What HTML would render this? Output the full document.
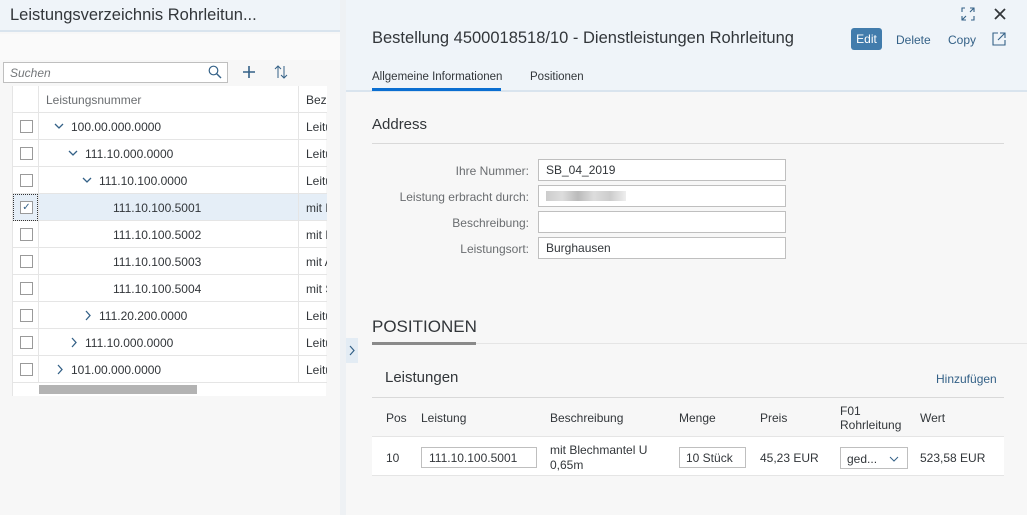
<!DOCTYPE html>
<html><head><meta charset="utf-8"><style>
*{margin:0;padding:0;box-sizing:border-box}
body{width:1027px;height:515px;overflow:hidden;background:#f7f7f7;font-family:"Liberation Sans",sans-serif;color:#32363a;position:relative;font-size:12px}
.a{position:absolute}
.lhdr{left:0;top:0;width:340px;height:32px;background:#eff4f9;border-bottom:2px solid #d9e4ee}
.ltitle{left:10px;top:6px;font-size:16.5px;color:#32363a}
.lbody{left:0;top:34px;width:340px;height:481px;background:#f7f7f7}
.search{left:3px;top:62px;width:225px;height:21px;background:#fff;border:1px solid #bfbfbf;font-style:italic;color:#74777a;font-size:12px;padding:3px 6px}
.tbl{left:12px;top:86px;width:314px;height:310px;background:#fff;border-left:1px solid #e5e5e5}
.row{position:absolute;left:0;width:314px;height:27px;border-bottom:1px solid #e5e5e5;font-size:12px}
.row .cb{position:absolute;left:7px;top:7px;width:13px;height:13px;border:1px solid #9a9a9a;background:#fff}
.row .c1{position:absolute;left:25px;top:0;width:1px;height:27px;background:#e5e5e5}
.row .c2{position:absolute;left:285px;top:0;width:1px;height:27px;background:#e5e5e5}
.row .t{position:absolute;top:7px}
.row .b{position:absolute;left:293px;top:7px;width:21px;overflow:hidden;white-space:nowrap}
.ar{position:absolute;top:9px}
.rhdr{left:346px;top:0;width:681px;height:92px;background:#eff4f9;border-bottom:2px solid #d9e4ee}
.inp{position:absolute;left:538px;width:248px;height:22px;background:#fff;border:1px solid #bfbfbf;padding:3px 7px;font-size:12px}
.lbl{position:absolute;right:498px;font-size:12px;color:#6a6d70}
.th{position:absolute;top:411px;font-size:12px;color:#32363a}
</style></head><body>
<div class="a lhdr"></div>
<div class="a ltitle">Leistungsverzeichnis Rohrleitun...</div>
<div class="a lbody"></div>
<div class="a" style="left:0;top:34px;width:340px;height:26px;background:#fafafa"></div>
<div class="a search">Suchen</div>
<svg class="a" style="left:208px;top:65px" width="14" height="14" viewBox="0 0 14 14"><circle cx="5.5" cy="5.5" r="4.3" fill="none" stroke="#346187" stroke-width="1.2"/><path d="M8.7 8.7L13 13" stroke="#346187" stroke-width="1.4"/></svg>
<svg class="a" style="left:242px;top:65px" width="14" height="14"><path d="M7 1v12M1 7h12" stroke="#346187" stroke-width="1.6"/></svg>
<svg class="a" style="left:274px;top:64px" width="14" height="16"><path d="M4 14V2M1 5l3-3 3 3M10 2v12M7 11l3 3 3-3" fill="none" stroke="#346187" stroke-width="1"/></svg>
<div class="a tbl">
<div class="row" style="top:0;background:#fff"><div class="c1"></div><div class="c2"></div><div class="t" style="left:33px;color:#6a6d70">Leistungsnummer</div><div class="b">Bez</div></div>
<div class="row" style="top:27px"><div class="cb"></div><div class="c1"></div><div class="c2"></div><svg class="ar" style="left:41px" width="10" height="8"><path d="M1 2l4 4 4-4" fill="none" stroke="#346187" stroke-width="1.3"/></svg><div class="t" style="left:58px">100.00.000.0000</div><div class="b">Leitu</div></div>
<div class="row" style="top:54px"><div class="cb"></div><div class="c1"></div><div class="c2"></div><svg class="ar" style="left:55px" width="10" height="8"><path d="M1 2l4 4 4-4" fill="none" stroke="#346187" stroke-width="1.3"/></svg><div class="t" style="left:72px">111.10.000.0000</div><div class="b">Leitu</div></div>
<div class="row" style="top:81px"><div class="cb"></div><div class="c1"></div><div class="c2"></div><svg class="ar" style="left:69px" width="10" height="8"><path d="M1 2l4 4 4-4" fill="none" stroke="#346187" stroke-width="1.3"/></svg><div class="t" style="left:86px">111.10.100.0000</div><div class="b">Leitu</div></div>
<div class="row" style="top:108px;background:#e5eef7"><div style="position:absolute;left:0;top:0;width:25px;height:27px;border:1px dotted #333"></div><div class="cb" style="color:#346187;font-size:10px;line-height:11px;text-align:center">&#10003;</div><div class="c1"></div><div class="c2"></div><div class="t" style="left:100px">111.10.100.5001</div><div class="b">mit B</div></div>
<div class="row" style="top:135px"><div class="cb"></div><div class="c1"></div><div class="c2"></div><div class="t" style="left:100px">111.10.100.5002</div><div class="b">mit B</div></div>
<div class="row" style="top:162px"><div class="cb"></div><div class="c1"></div><div class="c2"></div><div class="t" style="left:100px">111.10.100.5003</div><div class="b">mit A</div></div>
<div class="row" style="top:189px"><div class="cb"></div><div class="c1"></div><div class="c2"></div><div class="t" style="left:100px">111.10.100.5004</div><div class="b">mit S</div></div>
<div class="row" style="top:216px"><div class="cb"></div><div class="c1"></div><div class="c2"></div><svg class="ar" style="left:71px;top:8px" width="8" height="11"><path d="M2 1l4 4.5L2 10" fill="none" stroke="#346187" stroke-width="1.3"/></svg><div class="t" style="left:86px">111.20.200.0000</div><div class="b">Leitu</div></div>
<div class="row" style="top:243px"><div class="cb"></div><div class="c1"></div><div class="c2"></div><svg class="ar" style="left:57px;top:8px" width="8" height="11"><path d="M2 1l4 4.5L2 10" fill="none" stroke="#346187" stroke-width="1.3"/></svg><div class="t" style="left:72px">111.10.000.0000</div><div class="b">Leitu</div></div>
<div class="row" style="top:270px"><div class="cb"></div><div class="c1"></div><div class="c2"></div><svg class="ar" style="left:43px;top:8px" width="8" height="11"><path d="M2 1l4 4.5L2 10" fill="none" stroke="#346187" stroke-width="1.3"/></svg><div class="t" style="left:58px">101.00.000.0000</div><div class="b">Leitu</div></div>
<div style="position:absolute;left:26px;top:299px;width:158px;height:9px;background:#b3b3b3"></div>
</div>
<div class="a" style="left:340px;top:0;width:6px;height:515px;background:#eef1f4"></div>
<div class="a rhdr"></div>
<div class="a" style="left:372px;top:29px;font-size:16.5px">Bestellung 4500018518/10 - Dienstleistungen Rohrleitung</div>
<div class="a" style="left:851px;top:28px;width:31px;height:22px;background:#427cac;border-radius:3px;color:#fff;font-size:12px;text-align:center;line-height:22px">Edit</div>
<div class="a" style="left:896px;top:33px;color:#346187">Delete</div>
<div class="a" style="left:948px;top:33px;color:#346187">Copy</div>
<svg class="a" style="left:992px;top:32px" width="14" height="14"><path d="M6 1H1v12h12V8M8 1h5v5M13 1L6 8" fill="none" stroke="#346187" stroke-width="1.1"/></svg>
<svg class="a" style="left:961px;top:7px" width="14" height="14"><path d="M9 1h4v4M13 1L9 5M5 13H1V9M1 13l4-4M1 5V1h3M13 9v4h-3" fill="none" stroke="#346187" stroke-width="1.1"/></svg>
<svg class="a" style="left:994px;top:8px" width="12" height="12"><path d="M1 1l10 10M11 1L1 11" stroke="#32363a" stroke-width="1.8"/></svg>
<div class="a" style="left:372px;top:71px;font-size:11.5px">Allgemeine Informationen</div>
<div class="a" style="left:530px;top:71px;font-size:11.5px;color:#32363a">Positionen</div>
<div class="a" style="left:372px;top:88px;width:129px;height:3px;background:#0a6ed1"></div>
<div class="a" style="left:372px;top:116px;font-size:15px">Address</div>
<div class="a" style="left:372px;top:143px;width:632px;height:1px;background:#d9d9d9"></div>
<div class="lbl" style="top:164px">Ihre Nummer:</div>
<div class="lbl" style="top:190px">Leistung erbracht durch:</div>
<div class="lbl" style="top:216px">Beschreibung:</div>
<div class="lbl" style="top:242px">Leistungsort:</div>
<div class="inp" style="top:159px">SB_04_2019</div>
<div class="inp" style="top:185px"><span style="display:inline-block;width:80px;height:10px;margin-top:2px;background:linear-gradient(90deg,#ccc,#ddd 20%,#bbb 40%,#ddd 60%,#ccc 80%,#eee)"></span></div>
<div class="inp" style="top:211px"></div>
<div class="inp" style="top:237px">Burghausen</div>
<div class="a" style="left:372px;top:317px;font-size:17px">POSITIONEN</div>
<div class="a" style="left:372px;top:343px;width:655px;height:1px;background:#e5e5e5"></div>
<div class="a" style="left:372px;top:342px;width:104px;height:3px;background:#8a8a8a"></div>
<div class="a" style="left:346px;top:338px;width:12px;height:25px;background:#e3ecf4"></div>
<svg class="a" style="left:348px;top:345px" width="8" height="11"><path d="M2 1l4 4.5L2 10" fill="none" stroke="#346187" stroke-width="1.2"/></svg>
<div class="a" style="left:385px;top:369px;font-size:15px">Leistungen</div>
<div class="a" style="left:936px;top:372px;color:#346187">Hinzufügen</div>
<div class="a" style="left:372px;top:397px;width:632px;height:1px;background:#d9d9d9"></div>
<div class="a" style="left:372px;top:436px;width:632px;height:40px;background:#fff;border-top:1px solid #e5e5e5;border-bottom:1px solid #e5e5e5"></div>
<div class="th" style="left:386px">Pos</div>
<div class="th" style="left:421px">Leistung</div>
<div class="th" style="left:550px">Beschreibung</div>
<div class="th" style="left:679px">Menge</div>
<div class="th" style="left:760px">Preis</div>
<div class="th" style="left:840px;top:404px;line-height:14px">F01<br>Rohrleitung</div>
<div class="th" style="left:920px">Wert</div>
<div class="a" style="left:386px;top:451px">10</div>
<div class="a" style="left:421px;top:447px;width:116px;height:21px;background:#fff;border:1px solid #bfbfbf;padding:3px 7px">111.10.100.5001</div>
<div class="a" style="left:550px;top:443px;line-height:15px">mit Blechmantel U<br>0,65m</div>
<div class="a" style="left:679px;top:447px;width:67px;height:21px;background:#fff;border:1px solid #bfbfbf;padding:3px 6px">10 Stück</div>
<div class="a" style="left:760px;top:451px">45,23 EUR</div>
<div class="a" style="left:840px;top:447px;width:68px;height:22px;background:#fff;border:1px solid #bfbfbf;padding:4px 6px">ged...<svg style="position:absolute;right:8px;top:7px" width="10" height="8"><path d="M1 2l4 4 4-4" fill="none" stroke="#346187" stroke-width="1"/></svg></div>
<div class="a" style="left:920px;top:451px">523,58 EUR</div>
</body></html>
